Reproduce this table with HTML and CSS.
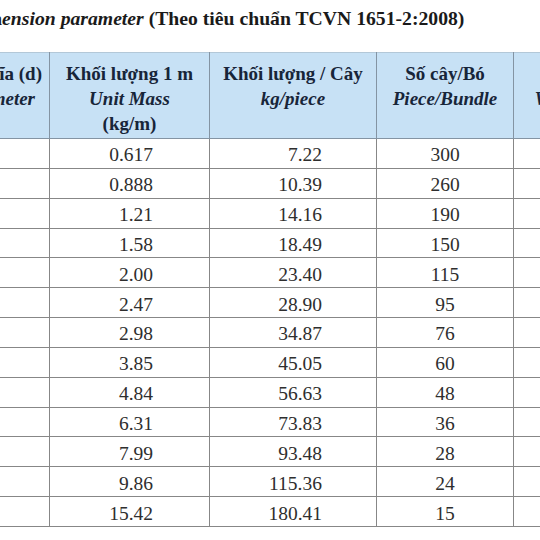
FILE: index.html
```html
<!DOCTYPE html>
<html lang="vi">
<head>
<meta charset="utf-8">
<title>Thông số kích thước</title>
<link rel="stylesheet" href="styles.css">
</head>
<body>
<div class="sheet">
  <p class="caption"><span class="caption-hidden">Dim</span><em>ension parameter</em> (Theo tiêu chuẩn TCVN 1651-2:2008)</p>
  <table class="spec">
    <colgroup>
      <col class="c1"><col class="c2"><col class="c3"><col class="c4"><col class="c5">
    </colgroup>
    <thead>
      <tr>
        <th class="h1"><span class="ln">Đường kính danh nghĩa (d)</span><span class="ln en shift">Nominal Diameter</span></th>
        <th><span class="ln">Khối lượng 1 m</span><span class="ln en">Unit Mass</span><span class="ln">(kg/m)</span></th>
        <th><span class="ln">Khối lượng / Cây</span><span class="ln en">kg/piece</span></th>
        <th><span class="ln">Số cây/Bó</span><span class="ln en">Piece/Bundle</span></th>
        <th><span class="ln">KL bó</span><span class="ln en">Weight/Bundle</span></th>
      </tr>
    </thead>
    <tbody>
      <tr><td>10</td><td class="num m">0.617</td><td class="num p">7.22</td><td>300</td><td>2166</td></tr>
      <tr><td>12</td><td class="num m">0.888</td><td class="num p">10.39</td><td>260</td><td>2701</td></tr>
      <tr><td>14</td><td class="num m">1.21</td><td class="num p">14.16</td><td>190</td><td>2690</td></tr>
      <tr><td>16</td><td class="num m">1.58</td><td class="num p">18.49</td><td>150</td><td>2774</td></tr>
      <tr><td>18</td><td class="num m">2.00</td><td class="num p">23.40</td><td>115</td><td>2691</td></tr>
      <tr><td>20</td><td class="num m">2.47</td><td class="num p">28.90</td><td>95</td><td>2746</td></tr>
      <tr><td>22</td><td class="num m">2.98</td><td class="num p">34.87</td><td>76</td><td>2650</td></tr>
      <tr><td>25</td><td class="num m">3.85</td><td class="num p">45.05</td><td>60</td><td>2703</td></tr>
      <tr><td>28</td><td class="num m">4.84</td><td class="num p">56.63</td><td>48</td><td>2718</td></tr>
      <tr><td>32</td><td class="num m">6.31</td><td class="num p">73.83</td><td>36</td><td>2658</td></tr>
      <tr><td>36</td><td class="num m">7.99</td><td class="num p">93.48</td><td>28</td><td>2617</td></tr>
      <tr><td>40</td><td class="num m">9.86</td><td class="num p">115.36</td><td>24</td><td>2769</td></tr>
      <tr><td>50</td><td class="num m">15.42</td><td class="num p">180.41</td><td>15</td><td>2706</td></tr>
    </tbody>
  </table>
</div>
</body>
</html>
```

FILE: styles.css
```css
html, body {
  margin: 0;
  padding: 0;
  background: #ffffff;
}
body {
  width: 540px;
  height: 540px;
  overflow: hidden;
  font-family: "Liberation Serif", "Times New Roman", serif;
}
.sheet {
  width: 900px;
}
.caption {
  margin: 0 0 0 -34px;
  height: 52px;
  padding-top: 5px;
  box-sizing: border-box;
  font-size: 19.7px;
  font-weight: bold;
  color: #1a1a1a;
  line-height: 26px;
  white-space: nowrap;
}
.caption em {
  font-style: italic;
}
.spec {
  margin-left: -191px;
  border-collapse: collapse;
  table-layout: fixed;
  width: 863px;
}
.c1 { width: 240px; }
.c2 { width: 160px; }
.c3 { width: 167px; }
.c4 { width: 137px; }
.c5 { width: 159px; }

.spec th {
  background: #c7e1f5;
  color: #172539;
  font-size: 19px;
  font-weight: bold;
  line-height: 25px;
  height: 86px;
  box-sizing: border-box;
  padding: 8px 2px 0;
  vertical-align: top;
  text-align: center;
  border: 1px solid #8494a3;
  border-top-color: #b3c8d8;
  white-space: nowrap;
  overflow: hidden;
}
.spec th .ln {
  display: block;
}
.spec th .en {
  font-style: italic;
}
.spec th.h1 {
  text-align: right;
  padding-right: 7px;
}
.spec th .shift {
  margin-right: 7px;
}
.spec td {
  height: 29.85px;
  box-sizing: border-box;
  padding: 4px 4px 0;
  border: 1px solid #878787;
  font-size: 19.5px;
  color: #2e2e2e;
  text-align: center;
  vertical-align: middle;
  line-height: 22px;
}
.spec td.num.m {
  text-align: right;
  padding-right: 56px;
}
.spec td.num.p {
  text-align: right;
  padding-right: 54px;
}
```
